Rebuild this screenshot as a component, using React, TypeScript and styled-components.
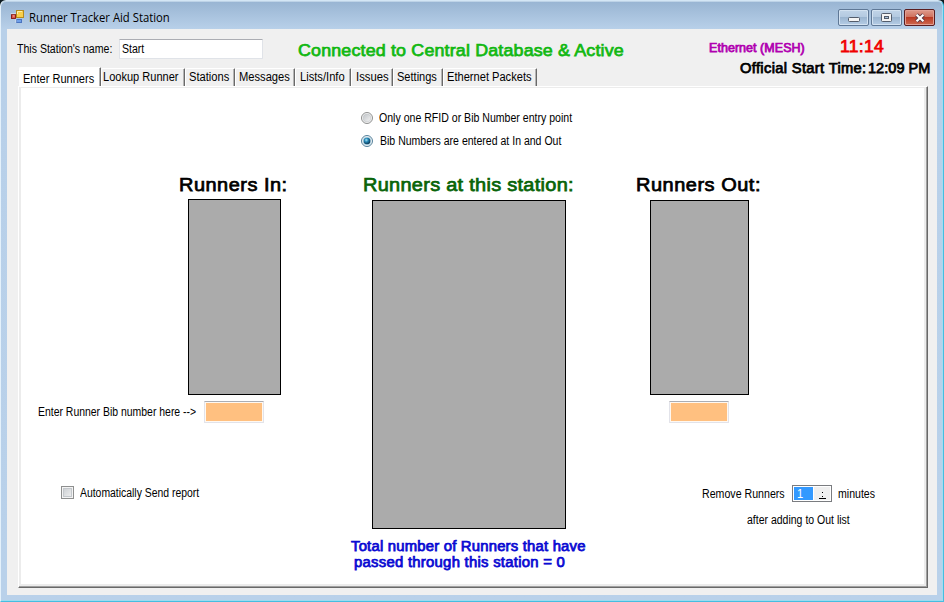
import React from 'react';
import styled, { createGlobalStyle } from 'styled-components';

const GlobalStyle = createGlobalStyle`
  * { box-sizing: border-box; }
  body { margin: 0; background: #0d1a20; overflow: hidden; font-family: "Liberation Sans", Arial, sans-serif; }
`;

/* Window frame */
const WindowFrame = styled.div`
  display: flex;
  flex-direction: column;
  width: 944px;
  height: 602px;
  padding: 0 6px 6px 6px;
  border: 1px solid #46bde0;
  border-top-color: #d4e6f5;
  border-left-color: #e4f1fb;
  border-radius: 6px 6px 0 0;
  background: linear-gradient(#98b4d2 0, #b8d0e9 28px, #b9d1ea 100%);
  box-shadow: inset -1px 0 #a4dcf1, inset 0 -1px #9adcf0, inset 0 1px #bed3e7;
`;

const TitleBar = styled.header`
  display: flex;
  align-items: flex-start;
  height: 28px;
  flex: none;
  padding: 8px 2px 0 3px;
`;

const AppIcon = styled.svg`
  width: 14px;
  height: 14px;
  margin: 1px 5px 0 0;
`;

const CaptionButtons = styled.div`
  display: flex;
  gap: 2px;
  margin-left: auto;
`;

const CaptionButton = styled.button<{ $close?: boolean }>`
  display: flex;
  align-items: center;
  justify-content: center;
  width: 31px;
  height: 17px;
  padding: 0;
  border: 1px solid ${p => (p.$close ? '#5a1d20' : '#5f7896')};
  border-radius: 2px;
  box-shadow: inset 0 0 0 1px ${p => (p.$close ? '#e2a094' : '#d3e2f1')};
  background: ${p =>
    p.$close
      ? 'linear-gradient(#de9a8b 0, #cf705d 48%, #b93a24 50%, #cf6a50 100%)'
      : 'linear-gradient(#c1d4e8 0, #b3c9e0 48%, #9bb5d0 50%, #b5cde6 100%)'};
`;

const Client = styled.main`
  display: flex;
  flex-direction: column;
  flex: 1;
  min-height: 0;
  padding: 0 9px 7px 10px;
  background: #f0f0f0;
`;

/* Text squeezed horizontally to GUI font proportions */
const Text = styled.span<{ $w: number; $k: number; $line?: number; $color?: string }>`
  display: block;
  flex: none;
  width: ${p => p.$w}px;
  font-size: 12px;
  line-height: ${p => p.$line ?? 16}px;
  color: ${p => p.$color ?? '#000'};
  white-space: pre;
  transform: scaleX(${p => p.$k});
  transform-origin: 0 0;
`;

const Caption = styled(Text)`
  font-family: "Open Sans", "Noto Sans", sans-serif;
`;

/* Emboldened regular face with widened advances */
const Strong = styled.span<{ $w: number; $size: number; $track: number; $k: number; $line?: number; $color?: string }>`
  display: block;
  flex: none;
  width: ${p => p.$w}px;
  font-size: ${p => p.$size}px;
  line-height: ${p => p.$line ?? 16}px;
  letter-spacing: ${p => p.$track}px;
  color: ${p => p.$color ?? '#000'};
  -webkit-text-stroke: 0.75px currentColor;
  white-space: pre;
  transform: scaleX(${p => p.$k});
  transform-origin: 0 0;
`;

/* Header */
const Header = styled.section`
  display: flex;
  height: 57px;
  flex: none;
`;

const HeaderLeft = styled.div`
  width: 692px;
  flex: none;
`;

const NameRow = styled.div`
  display: flex;
  align-items: flex-start;
  height: 38px;
  padding-top: 10px;
`;

const NameLabel = styled.div`
  padding-top: 2px;
  width: 102px;
`;

const NameInput = styled.div`
  width: 144px;
  height: 20px;
  padding: 1px 0 0 2px;
  margin-right: 35px;
  border: 1px solid #e0e3e8;
  border-top-color: #abadb3;
  border-radius: 1px;
  background: #fff;
`;

const Tabs = styled.nav`
  display: flex;
  align-items: flex-end;
  height: 19px;
  padding-left: 2px;
`;

const Tab = styled.div<{ $width: number; $inset: number; $active?: boolean }>`
  width: ${p => p.$width}px;
  height: ${p => (p.$active ? 20 : 18)}px;
  margin-bottom: ${p => (p.$active ? -1 : 0)}px;
  padding: ${p => (p.$active ? 3 : 0)}px 0 0 ${p => p.$inset}px;
  border-top: 1px solid #fff;
  border-left: 1px solid #fff;
  border-right: 1px solid #696969;
  border-radius: 2px 1px 0 0;
  box-shadow: inset -1px 0 #b4b4b4;
  background: ${p => (p.$active ? '#fff' : '#f0f0f0')};
`;

const HeaderRight = styled.div`
  flex: 1;
  padding-top: 8px;
`;

const LinkRow = styled.div`
  display: flex;
  align-items: baseline;
  height: 23px;
  gap: 35px;
`;

const TimeRow = styled.div`
  display: flex;
  padding-left: 31px;
`;

/* Tab page */
const Page = styled.section`
  flex: 1;
  min-height: 0;
  display: flex;
  flex-direction: column;
  margin-left: 1px;
  padding: 0 2px 2px 2px;
  border: 1px solid;
  border-color: #fff #696969 #696969 #fff;
  box-shadow: inset -1px -1px #a0a0a0;
  background: #ececec;
`;

const PageBody = styled.div`
  flex: 1;
  margin: 1px 1px 1px 0;
  background: #fff;
`;

const Radios = styled.div`
  display: flex;
  flex-direction: column;
  gap: 7px;
  height: 85px;
  padding: 22px 0 0 340px;
`;

const RadioRow = styled.label<{ $gap: number }>`
  display: flex;
  align-items: center;
  gap: ${p => p.$gap}px;
  height: 16px;
`;

const RadioMark = styled.svg`
  width: 12px;
  height: 12px;
`;

const Columns = styled.div`
  display: grid;
  grid-template-columns: 330px 249px 325px;
`;

const Column = styled.div`
  display: flex;
  flex-direction: column;
`;

const Heading = styled.div<{ $left: number; $gap: number }>`
  height: 22px;
  padding-top: 1px;
  margin: 0 0 ${p => p.$gap}px ${p => p.$left}px;
`;

const ListBox = styled.div<{ $left: number; $width: number; $height: number }>`
  width: ${p => p.$width}px;
  height: ${p => p.$height}px;
  margin-left: ${p => p.$left}px;
  border: 1px solid #000;
  background: #ababab;
`;

const Line = styled.div<{ $left: number; $top: number; $gap?: number }>`
  display: flex;
  align-items: center;
  gap: ${p => p.$gap ?? 0}px;
  margin: ${p => p.$top}px 0 0 ${p => p.$left}px;
`;

const BibInput = styled.div`
  width: 60px;
  height: 22px;
  border: 1px solid #e2e3ea;
  border-top-color: #abadb3;
  border-radius: 1px;
  background: #ffc080;
  box-shadow: inset 0 0 0 1px #fff8f0;
`;

const CheckBox = styled.div`
  width: 13px;
  height: 13px;
  margin-bottom: 2px;
  border: 1px solid #8e8f8f;
  background: linear-gradient(135deg, #c6cace, #f4f4f4);
  box-shadow: inset 0 0 0 1px #f4f4f4, inset 0 0 0 2px #c4c8cc;
`;

const Spinner = styled.div`
  display: flex;
  width: 40px;
  height: 17px;
  padding: 1px;
  border: 1px solid #7a7c80;
  background: #fff;
`;

const SpinnerValue = styled.div`
  width: 19px;
  height: 13px;
  padding-left: 3px;
  background: #3399ff;
`;

const SpinnerArrows = styled.svg`
  width: 16px;
  height: 13px;
  margin-left: 1px;
  background: #efefef;
`;

const Total = styled.div`
  margin-top: 9px;
`;

const TotalLine = styled.div<{ $left: number }>`
  height: 16px;
  padding-left: ${p => p.$left}px;
`;

const tabs = [
  { label: 'Enter Runners', width: 82, inset: 3, text: 72, scale: 0.92 },
  { label: 'Lookup Runner', width: 84, inset: 1, text: 76, scale: 0.92 },
  { label: 'Stations', width: 50, inset: 3, text: 41, scale: 0.93 },
  { label: 'Messages', width: 60, inset: 3, text: 51, scale: 0.93 },
  { label: 'Lists/Info', width: 56, inset: 4, text: 45, scale: 0.93 },
  { label: 'Issues', width: 42, inset: 4, text: 33, scale: 0.94 },
  { label: 'Settings', width: 50, inset: 3, text: 41, scale: 0.92 },
  { label: 'Ethernet Packets', width: 94, inset: 3, text: 85, scale: 0.925 },
];

function Radio({ checked }: { checked?: boolean }) {
  return (
    <RadioMark viewBox="0 0 12 12">
      <defs>
        <radialGradient id="dot" cx=".4" cy=".35" r=".65">
          <stop offset="0" stopColor="#a9e6f8" />
          <stop offset=".45" stopColor="#2485b4" />
          <stop offset="1" stopColor="#0b3552" />
        </radialGradient>
        <linearGradient id="well" x2="1" y2="1">
          <stop offset="0" stopColor="#c0c4c8" />
          <stop offset="1" stopColor="#f4f4f4" />
        </linearGradient>
      </defs>
      <circle cx="6" cy="6" r="5.5" fill="#f6f6f6" stroke={checked ? '#54809b' : '#8e8f8f'} />
      <circle cx="6" cy="6" r="3.9" fill={checked ? '#b9dff0' : 'url(#well)'} stroke={checked ? '#9fc6da' : '#c3c6c9'} strokeWidth=".6" />
      {checked && <circle cx="6" cy="6" r="3.3" fill="url(#dot)" />}
    </RadioMark>
  );
}

export default function App() {
  return (
    <>
      <GlobalStyle />
      <WindowFrame>
        <TitleBar>
          <AppIcon viewBox="0 0 14 14">
            <rect x="6.5" y=".5" width="7" height="7" fill="#f8cf4b" stroke="#b58a1d" />
            <path d="M7.5 4V1.5H12" fill="none" stroke="#fff0a8" />
            <rect x="1.5" y="4.5" width="4" height="4" fill="#d8574a" stroke="#8c1f1c" />
            <path d="M3 6h1.5" stroke="#f6b3a8" />
            <rect x="6.5" y="9.5" width="5" height="3" fill="#6f9fe8" stroke="#4a74c0" />
            <path d="M5.9 8.8v3.8M.8 3.7h5" stroke="#e8eef6" strokeWidth=".7" />
          </AppIcon>
          <Caption $w={142} $k={0.94} $line={18}>Runner Tracker Aid Station</Caption>
          <CaptionButtons>
            <CaptionButton aria-label="Minimize">
              <svg width="12" height="8" viewBox="0 0 12 8">
                <rect x=".5" y="3.5" width="11" height="4" rx="1" fill="#f4f4f4" stroke="#535c6b" />
              </svg>
            </CaptionButton>
            <CaptionButton aria-label="Maximize">
              <svg width="11" height="9" viewBox="0 0 11 9">
                <rect x=".5" y=".5" width="10" height="8" rx="1" fill="#f4f4f4" stroke="#535c6b" />
                <rect x="3.5" y="3.5" width="4" height="2" fill="#a8c0da" stroke="#535c6b" />
              </svg>
            </CaptionButton>
            <CaptionButton $close aria-label="Close">
              <svg width="12" height="10" viewBox="0 0 12 10">
                <path d="M2.5 1.8 9.5 8.2M9.5 1.8 2.5 8.2" stroke="#5b3c48" strokeWidth="4" />
                <path d="M2.6 1.8 9.4 8.2M9.4 1.8 2.6 8.2" stroke="#fff" strokeWidth="2.2" />
              </svg>
            </CaptionButton>
          </CaptionButtons>
        </TitleBar>
        <Client>
          <Header>
            <HeaderLeft>
              <NameRow>
                <NameLabel>
                  <Text $w={96} $k={0.88}>This Station's name:</Text>
                </NameLabel>
                <NameInput>
                  <Text $w={23} $k={0.88}>Start</Text>
                </NameInput>
                <Strong $w={326} $track={0.16} $k={1.05} $size={17} $line={24} $color="#12b812">
                  {'Connected to Central Database & Active'}
                </Strong>
              </NameRow>
              <Tabs>
                {tabs.map((t, i) => (
                  <Tab key={t.label} $width={t.width} $inset={t.inset} $active={i === 0}>
                    <Text $w={t.text} $k={t.scale}>{t.label}</Text>
                  </Tab>
                ))}
              </Tabs>
            </HeaderLeft>
            <HeaderRight>
              <LinkRow>
                <Strong $w={96} $track={0.05} $k={1.04} $size={12} $color="#b000b0">Ethernet (MESH)</Strong>
                <Strong $w={44} $track={0.3} $k={1.03} $size={17} $line={20} $color="#f00000">11:14</Strong>
              </LinkRow>
              <TimeRow>
                <Strong $w={128} $track={0.32} $k={1.05} $size={14}>Official Start Time:</Strong>
                <Strong $w={62} $track={0.05} $k={1.035} $size={14}>12:09 PM</Strong>
              </TimeRow>
            </HeaderRight>
          </Header>
          <Page>
            <PageBody>
              <Radios>
                <RadioRow $gap={6}>
                  <Radio />
                  <Text $w={193} $k={0.88}>Only one RFID or Bib Number entry point</Text>
                </RadioRow>
                <RadioRow $gap={7}>
                  <Radio checked />
                  <Text $w={182} $k={0.877}>Bib Numbers are entered at In and Out</Text>
                </RadioRow>
              </Radios>
              <Columns>
                <Column>
                  <Heading $left={158} $gap={4}>
                    <Strong $w={108} $track={0.47} $k={1.05} $size={19} $line={22}>Runners In:</Strong>
                  </Heading>
                  <ListBox $left={167} $width={93} $height={196} />
                  <Line $left={17} $top={6} $gap={7}>
                    <Text $w={159} $k={0.87}>{'Enter Runner Bib number here -->'}</Text>
                    <BibInput />
                  </Line>
                  <Line $left={40} $top={62} $gap={6}>
                    <CheckBox />
                    <Text $w={120} $k={0.867}>Automatically Send report</Text>
                  </Line>
                </Column>
                <Column>
                  <Heading $left={12} $gap={5}>
                    <Strong $w={211} $track={0.27} $k={1.05} $size={19} $line={22} $color="#086408">Runners at this station:</Strong>
                  </Heading>
                  <ListBox $left={21} $width={194} $height={329} />
                  <Total>
                    <TotalLine $left={0}>
                      <Strong $w={236} $track={0.2} $k={1.06} $size={14} $color="#0a0ad2">Total number of Runners that have</Strong>
                    </TotalLine>
                    <TotalLine $left={3}>
                      <Strong $w={211} $track={0.26} $k={1.06} $size={14} $color="#0a0ad2">passed through this station = 0</Strong>
                    </TotalLine>
                  </Total>
                </Column>
                <Column>
                  <Heading $left={36} $gap={5}>
                    <Strong $w={124} $track={0.5} $k={1.05} $size={19} $line={22}>Runners Out:</Strong>
                  </Heading>
                  <ListBox $left={50} $width={99} $height={195} />
                  <Line $left={69} $top={6}>
                    <BibInput />
                  </Line>
                  <Line $left={102} $top={62} $gap={6}>
                    <Text $w={84} $k={0.885}>Remove Runners</Text>
                    <Spinner>
                      <SpinnerValue>
                        <Text $w={6} $k={0.93} $line={14} $color="#fff">1</Text>
                      </SpinnerValue>
                      <SpinnerArrows viewBox="0 0 16 13">
                        <path d="M8 5h1v1H8zM8 9h1v1H8zM5 11h7v1H5z" fill="#000" />
                      </SpinnerArrows>
                    </Spinner>
                    <Text $w={38} $k={0.88}>minutes</Text>
                  </Line>
                  <Line $left={147} $top={10}>
                    <Text $w={104} $k={0.875}>after adding to Out list</Text>
                  </Line>
                </Column>
              </Columns>
            </PageBody>
          </Page>
        </Client>
      </WindowFrame>
    </>
  );
}
